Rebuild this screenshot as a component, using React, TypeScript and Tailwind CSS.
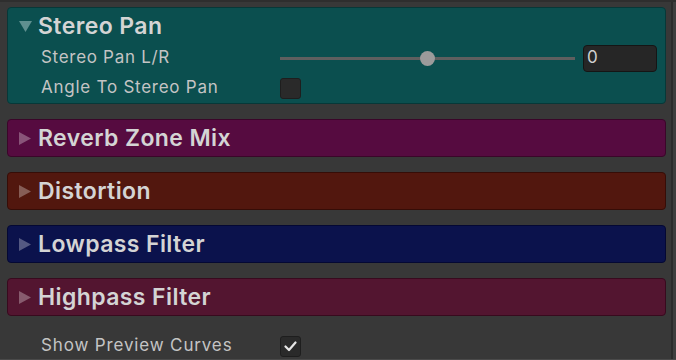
import React from "react";

const font = { fontFamily: "Inter, 'Noto Sans', sans-serif" };

function Header({ title, open }: { title: string; open?: boolean }) {
  return (
    <div className="flex items-center h-[36px]">
      <span className="w-[30px] pl-[11px] flex items-center">
        {open ? (
          <svg width="13" height="11" viewBox="0 0 13 11">
            <path d="M0 0 H13 L6.5 11 Z" fill="#5f8f8f" />
          </svg>
        ) : (
          <svg width="12" height="13" viewBox="0 0 12 13">
            <path d="M0 0 L12 6.5 L0 13 Z" fill="#ffffff" opacity="0.3" />
          </svg>
        )}
      </span>
      <span className="text-[23px] font-semibold text-[#d4d4d4] tracking-[0.4px]">{title}</span>
    </div>
  );
}

function Collapsed({ title, bg, border }: { title: string; bg: string; border: string }) {
  return (
    <div className={`rounded-[4px] border h-[38px] ${bg} ${border}`}>
      <Header title={title} />
    </div>
  );
}

export default function App() {
  return (
    <div
      className="relative w-[676px] h-[360px] bg-[#383838] overflow-hidden border-t-2 border-t-[#2e2e2e] border-b border-b-[#4a4a4a]"
      style={font}
    >
      <div className="absolute right-0 top-0 bottom-0 w-[5px] border-l-2 border-l-[#2b2b2b] bg-[#3e3e3e]" />
      <div className="flex flex-col gap-[15px] pl-[7px] pr-[10px] pt-[5px]">
        <div className="rounded-[4px] border border-[#073838] bg-[#0b4f4f] h-[97px]">
          <Header title="Stereo Pan" open />
          <div className="flex items-center h-[30px] mt-[-1px]">
            <span className="w-[272px] pl-[33px] text-[17px] tracking-[0.7px] text-[#c4c4c4]">Stereo Pan L/R</span>
            <div className="relative w-[295px] h-[3px] bg-[#5f5f5f]">
              <div className="absolute left-[140px] top-[-6px] w-[15px] h-[15px] rounded-full bg-[#9b9b9b]" />
            </div>
            <div className="ml-[8px] w-[74px] h-[27px] rounded-[4px] bg-[#262626] border border-[#151515] flex items-center pl-[3px] text-[17px] text-[#d0d0d0]">
              0
            </div>
          </div>
          <div className="flex items-center h-[30px]">
            <span className="w-[272px] pl-[33px] text-[17px] tracking-[0.75px] text-[#c4c4c4]">Angle To Stereo Pan</span>
            <div className="w-[21px] h-[21px] rounded-[3px] bg-[#2a2a2a] border border-[#1e1e1e]" />
          </div>
        </div>
        <Collapsed title="Reverb Zone Mix" bg="bg-[#560b40]" border="border-[#3a0629]" />
        <Collapsed title="Distortion" bg="bg-[#52170e]" border="border-[#360d07]" />
        <Collapsed title="Lowpass Filter" bg="bg-[#0b124c]" border="border-[#040833]" />
        <Collapsed title="Highpass Filter" bg="bg-[#531530]" border="border-[#380a1e]" />
        <div className="flex items-center h-[22px] mt-[4px]">
          <span className="w-[273px] pl-[34px] text-[17px] tracking-[0.85px] text-[#c4c4c4]">Show Preview Curves</span>
          <div className="w-[21px] h-[21px] rounded-[3px] bg-[#2a2a2a] border border-[#1e1e1e] flex items-center justify-center">
            <svg width="13" height="11" viewBox="0 0 13 11">
              <path d="M1.5 5.5 L5 9 L11.5 1.5" stroke="#e6e6e6" strokeWidth="2.2" fill="none" strokeLinecap="round" strokeLinejoin="round" />
            </svg>
          </div>
        </div>
      </div>
    </div>
  );
}
